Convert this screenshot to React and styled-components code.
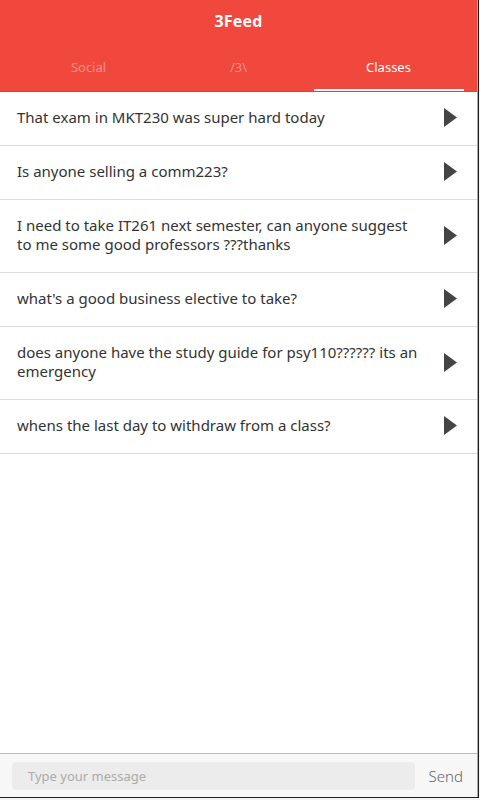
import React from "react";
import styled, { createGlobalStyle } from "styled-components";

const Global = createGlobalStyle`
  html, body { margin: 0; padding: 0; background: #f3f3f3; }
  body { font-family: "Noto Sans", "Open Sans", sans-serif; }
  * { box-sizing: border-box; }
`;

const Outer = styled.div`
  width: 479px;
  height: 798px;
  border-right: 1px solid #1e1e1e;
  border-bottom: 1px solid #1e1e1e;
  background: #fff;
`;

const Window = styled.div`
  width: 478px;
  height: 797px;
  border-right: 1px solid #a8a8a8;
  display: flex;
  flex-direction: column;
  background: #fff;
`;

const Header = styled.header`
  background: #f0483c;
  display: flex;
  flex-direction: column;
  border-bottom: 1px solid #ee3a2c;
`;

const Title = styled.h1`
  margin: 0;
  height: 43px;
  line-height: 42px;
  text-align: center;
  color: #fff;
  font-family: "Open Sans", sans-serif;
  font-weight: 700;
  font-size: 16px;
  letter-spacing: 0.2px;
`;

const Tabs = styled.nav`
  width: 450px;
  margin: 0 auto;
  display: grid;
  grid-template-columns: repeat(3, 1fr);
`;

const Tab = styled.div`
  height: 48px;
  display: flex;
  align-items: center;
  justify-content: center;
  font-size: 13px;
  color: ${(p) => (p.$active ? "#ffffff" : "rgba(255,255,255,0.4)")};
  border-bottom: 2px solid ${(p) => (p.$active ? "#ffffff" : "transparent")};
  padding-top: 2px;
`;

const List = styled.ul`
  list-style: none;
  margin: 0;
  padding: 0;
  flex: 1;
`;

const Row = styled.li`
  display: flex;
  align-items: center;
  justify-content: space-between;
  padding: 16px 20px 18px 17px;
  border-bottom: 1px solid #dcdcdc;
`;

const Text = styled.span`
  font-size: 15px;
  line-height: 19px;
  color: #333;
  max-width: 406px;
`;

const Arrow = styled.svg`
  width: 13px;
  height: 19px;
  flex-shrink: 0;
  fill: #444;
`;

const Footer = styled.footer`
  height: 44px;
  border-top: 1px solid #b9b9b9;
  background: #f7f7f7;
  display: flex;
  align-items: center;
  padding: 0 14px 0 12px;
  gap: 14px;
`;

const Input = styled.div`
  flex: 1;
  height: 28px;
  border-radius: 4px;
  background: #ececec;
  color: #ababab;
  font-size: 13px;
  display: flex;
  align-items: center;
  padding-left: 16px;
`;

const Send = styled.span`
  font-size: 15px;
  color: #666;
  font-weight: 300;
`;

const items = [
  "That exam in MKT230 was super hard today",
  "Is anyone selling a comm223?",
  "I need to take IT261 next semester, can anyone suggest to me some good professors ???thanks",
  "what's a good business elective to take?",
  "does anyone have the study guide for psy110?????? its an emergency",
  "whens the last day to withdraw from a class?",
];

export default function App() {
  return (
    <>
      <Global />
      <Outer>
        <Window>
          <Header>
            <Title>3Feed</Title>
            <Tabs>
              <Tab>Social</Tab>
              <Tab>/3\</Tab>
              <Tab $active>Classes</Tab>
            </Tabs>
          </Header>
          <List>
            {items.map((t) => (
              <Row key={t}>
                <Text>{t}</Text>
                <Arrow viewBox="0 0 13 19">
                  <path d="M0 0 L13 9.5 L0 19 Z" />
                </Arrow>
              </Row>
            ))}
          </List>
          <Footer>
            <Input>Type your message</Input>
            <Send>Send</Send>
          </Footer>
        </Window>
      </Outer>
    </>
  );
}
